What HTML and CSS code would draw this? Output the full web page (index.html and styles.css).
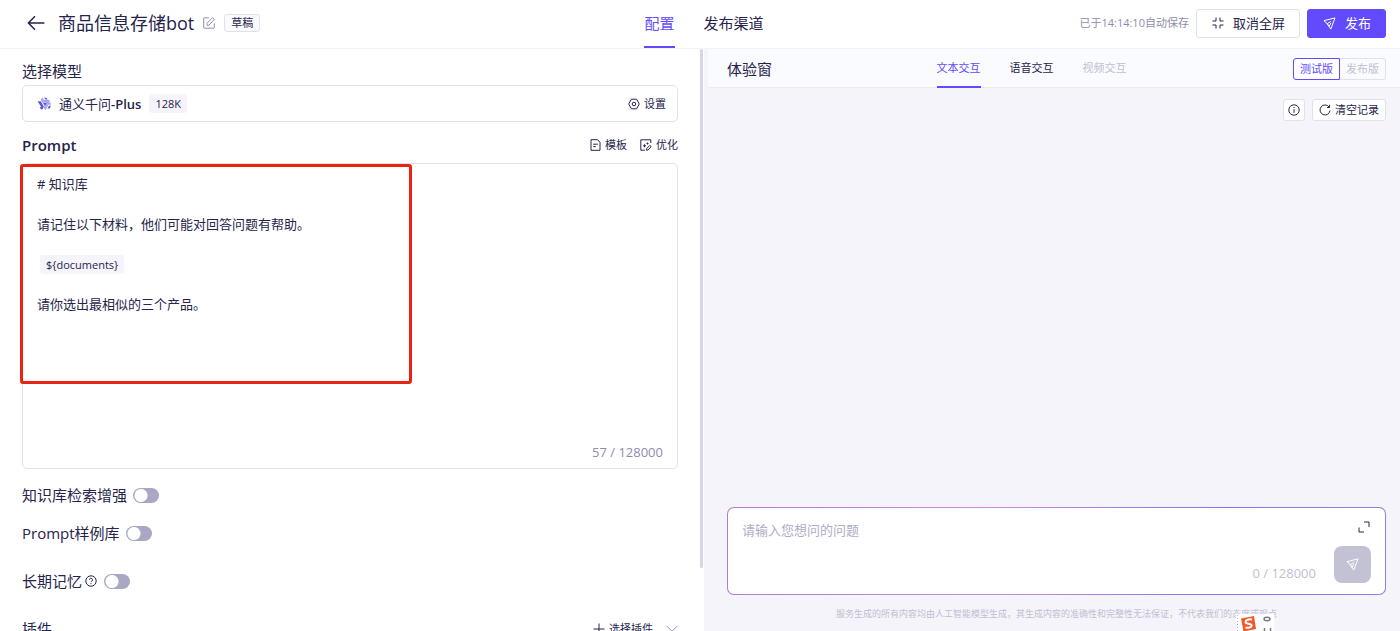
FILE: index.html
```
<!DOCTYPE html>
<html lang="zh-CN">
<head>
<meta charset="utf-8">
<meta name="viewport" content="width=device-width, initial-scale=1">
<title>商品信息存储bot</title>
<link rel="stylesheet" href="styles.css">
</head>
<body>
<div class="app">
  <header class="topbar">
    <div class="topbar-left">
      <button class="icon-btn back" aria-label="返回">
        <svg width="18" height="16" viewBox="0 0 18 16"><path d="M8 1.2 1.4 8 8 14.8M1.6 8H17.4"/></svg>
      </button>
      <h1 class="title">商品信息存储<b>bot</b></h1>
      <button class="icon-btn edit" aria-label="编辑名称">
        <svg width="12" height="12" viewBox="0 0 12 12"><path d="M6 .8H1.2a.5.5 0 0 0-.5.5v9.4c0 .3.2.5.5.5h9.6c.3 0 .5-.2.5-.5V6.500M4 8.200V6.300L9.600.7l1.800 1.700L5.900 8.200z"/></svg>
      </button>
      <span class="badge">草稿</span>
    </div>
    <nav class="tabs" aria-label="主导航">
      <a class="tab active" href="#config">配置</a>
      <a class="tab" href="#channels">发布渠道</a>
    </nav>
    <div class="topbar-right">
      <span class="saved">已于14:14:10自动保存</span>
      <button class="btn">
        <svg width="12" height="12" viewBox="0 0 12 12"><path d="M4 .5V4H.5M8 .5V4h3.500M4 11.500V8H.5M8 11.500V8h3.500"/></svg>
        取消全屏
      </button>
      <button class="btn primary">
        <svg width="13" height="13" viewBox="0 0 13 13"><path d="M12 .9.9 3.700l3.300 3 3.600 5.400zM4.200 6.700l3.600-2.200M4.200 6.700l1.800 2.700 2-3.600"/></svg>
        发布
      </button>
    </div>
  </header>

  <main class="panes">
    <section class="config">
      <h2 class="label">选择模型</h2>
      <div class="model">
        <svg class="model-logo" width="15" height="14" viewBox="0 0 15 14">
          <path class="logo-light" d="M5.200.6 7 3.100H13l-1.300 2.600H5.300L3.700 3zM14.300 7.600l-2.900.2-3 5.400-1.700-2.400 3-5.500h3.300z"/>
          <path class="logo-dark" d="M.6 4.200h3.100l3.200 5.400-1.300 2.700-1.600.2-1.300-2.600h1.500L1.500 5.700zM6 6h3.600L7.800 9z"/>
          <path class="logo-dark" d="M7.200.8h2.300l1.200 1.700H8.200zM12 8.800h2l-1.400 2.600h-2.200z"/>
        </svg>
        <span class="model-name">通义千问<b>-Plus</b></span>
        <span class="chip">128K</span>
        <button class="link-btn push">
          <svg width="12" height="12" viewBox="0 0 12 12"><path d="M3.400 1.200h5.200L11.300 6l-2.700 4.800H3.400L.7 6z"/><circle cx="6" cy="6" r="1.800"/></svg>
          设置
        </button>
      </div>

      <div class="prompt-head">
        <h2 class="label strong" id="prompt-label">Prompt</h2>
        <button class="link-btn push">
          <svg width="11" height="12" viewBox="0 0 11 12"><path d="M1 .7h6.500L10 3.200v8.100H1zM3.200 5.200h4.600M3.200 7.600h2.600"/></svg>
          模板
        </button>
        <button class="link-btn">
          <svg width="12" height="12" viewBox="0 0 12 12"><path d="M10.800 4V.8H.8v10.400H5M6.500 11.200l.3-1.800 3-3 1.400 1.300-3.200 3.300zM3 6.800h3M4.500 5.300v3M7.500 3.500v2M6.500 4.500h2"/></svg>
          优化
        </button>
      </div>

      <div class="prompt-box">
        <div class="prompt-text" contenteditable="true" role="textbox" aria-multiline="true" aria-labelledby="prompt-label" spellcheck="false">
          <p># 知识库</p>
          <p>请记住以下材料，他们可能对回答问题有帮助。</p>
          <p><span class="chip var">${documents}</span></p>
          <p>请你选出最相似的三个产品。</p>
        </div>
        <div class="counter">57 / 128000</div>
        <div class="highlight"></div>
      </div>

      <div class="option">
        <label class="label" for="kb">知识库检索增强</label>
        <input class="switch" id="kb" type="checkbox" role="switch">
      </div>
      <div class="option">
        <label class="label" for="samples"><b>Prompt</b>样例库</label>
        <input class="switch" id="samples" type="checkbox" role="switch">
      </div>
      <div class="option spaced">
        <label class="label" for="memory">长期记忆</label>
        <svg class="help" width="12" height="12" viewBox="0 0 12 12"><circle cx="6" cy="6" r="5.200"/><path d="M4.500 4.800a1.500 1.500 0 1 1 2.200 1.300c-.5.300-.7.500-.7 1M6 8.200v.9"/></svg>
        <input class="switch" id="memory" type="checkbox" role="switch">
      </div>
      <div class="option spaced">
        <h2 class="label">插件</h2>
        <button class="link-btn push">
          <svg width="12" height="12" viewBox="0 0 12 12"><path d="M6 .5v11M.5 6h11"/></svg>
          选择插件
        </button>
        <button class="icon-btn fold" aria-label="展开插件">
          <svg width="12" height="8" viewBox="0 0 12 8"><path d="M1 1.200 6 6.500l5-5.300"/></svg>
        </button>
      </div>
      <div class="scroll-thumb"></div>
    </section>

    <section class="chat">
      <div class="chat-head">
        <h2 class="label">体验窗</h2>
        <nav class="modes" aria-label="交互方式">
          <a class="mode active" href="#text">文本交互</a>
          <a class="mode" href="#voice">语音交互</a>
          <a class="mode disabled" aria-disabled="true">视频交互</a>
        </nav>
        <div class="versions">
          <button class="version active">测试版</button>
          <button class="version" disabled>发布版</button>
        </div>
      </div>
      <div class="chat-tools">
        <button class="small-btn square" aria-label="信息">
          <svg width="12" height="12" viewBox="0 0 12 12"><circle cx="6" cy="6" r="5.200"/><path d="M6 5.200v3.700M6 3v1"/></svg>
        </button>
        <button class="small-btn">
          <svg width="12" height="12" viewBox="0 0 12 12"><path d="M10.200 3.200A5 5 0 1 0 11 6.500M10.600.8v2.700H8"/></svg>
          清空记录
        </button>
      </div>
      <div class="chat-log"></div>
      <div class="composer">
        <textarea class="ask" aria-label="问题" placeholder="请输入您想问的问题"></textarea>
        <button class="icon-btn expand" aria-label="展开输入框">
          <svg width="12" height="12" viewBox="0 0 12 12"><path d="M6 1h5v5M1 6.500V11h5"/></svg>
        </button>
        <span class="ask-count">0 / 128000</span>
        <button class="send" aria-label="发送">
          <svg width="13" height="13" viewBox="0 0 13 13"><path d="M12 .9.9 3.700l3.300 3 3.600 5.400zM4.200 6.700l3.600-2.200M4.200 6.700l1.800 2.700 2-3.600"/></svg>
        </button>
      </div>
      <p class="notice">服务生成的所有内容均由人工智能模型生成，其生成内容的准确性和完整性无法保证，不代表我们的态度或观点</p>
      <div class="ime" aria-hidden="true">
        <svg width="38" height="17" viewBox="0 0 38 17">
          <path class="ime-grip" d="M1.500 1v16"/>
          <path class="ime-logo" d="M5 4.500 18 2l2 13-12.500 2.500z"/>
          <path class="ime-s" d="M16 5.500c-3-.6-6.500.3-6.500 2.400 0 2.400 6.200 1.200 6.200 3.700 0 2-3.200 2.600-6.200 1.900"/>
          <path class="ime-mark" d="M28 5c0-2.300 6-2.300 6 0s-6 2.300-6 0M28.500 14v3M34.500 14v3"/>
        </svg>
      </div>
    </section>
  </main>
</div>
</body>
</html>
```
FILE: styles.css
```
:root {
  --ink: #26244c;
  --muted: #8e8dab;
  --faint: #c0bfd2;
  --line: #e1e1ea;
  --accent: #624aff;
  --soft: #f5f4fa;
}

* {
  box-sizing: border-box;
}

body {
  margin: 0;
  color: var(--ink);
  background: #fff;
  font: 13px/20px "Open Sans", "Noto Sans CJK SC", sans-serif;
}

h1, h2, p {
  margin: 0;
  font-weight: 400;
}

a {
  color: inherit;
  text-decoration: none;
}

button {
  display: flex;
  align-items: center;
  justify-content: center;
  padding: 0;
  border: 0;
  color: inherit;
  background: none;
  font: inherit;
}

svg {
  flex: none;
  fill: none;
  stroke: currentColor;
  stroke-width: 1;
}

b {
  font-weight: 600;
}

.app {
  display: flex;
  flex-direction: column;
  height: 100vh;
  overflow: hidden;
}

/* Top bar */
.topbar {
  display: grid;
  grid-template-columns: 1fr auto 1fr;
  height: 49px;
  padding: 0 14px 0 22px;
  border-bottom: 1px solid #f3f3f7;
}

.topbar-left,
.topbar-right {
  display: flex;
  align-items: center;
  padding-bottom: 2px;
}

.topbar-right {
  justify-content: flex-end;
  gap: 7px;
}

.back {
  width: 28px;
  margin-right: 8px;
}

.back svg {
  stroke-width: 1.500;
}

.title {
  font-size: 18px;
  line-height: 28px;
}

.title b {
  font-weight: 500;
}

.edit {
  margin: 0 9px;
  color: var(--muted);
}

.badge {
  padding: 0 6px;
  border: 1px solid var(--line);
  border-radius: 3px;
  background: #fafafd;
  font-size: 11px;
  line-height: 16px;
}

.tabs {
  display: flex;
  gap: 29px;
}

.tab {
  height: 48px;
  font-size: 15px;
  line-height: 47px;
}

.tab.active {
  border-bottom: 2px solid var(--accent);
  color: var(--accent);
}

.saved {
  color: var(--muted);
  font-size: 11px;
}

.btn {
  gap: 9px;
  height: 29px;
  padding: 0 14px 0 15px;
  border: 1px solid var(--line);
  border-radius: 3px;
  background: #fff;
}

.btn.primary {
  border-color: var(--accent);
  color: #fff;
  background: var(--accent);
}

.panes {
  display: grid;
  flex: 1;
  grid-template-columns: 704fr 696fr;
  min-height: 0;
}

/* Configuration pane */
.config {
  position: relative;
  padding: 12px 26px 0 22px;
  overflow: hidden;
}

.label {
  font-size: 15px;
  line-height: 20px;
}

.label.strong {
  font-weight: 600;
}

.label b {
  font-weight: 500;
}

.model {
  display: flex;
  align-items: center;
  height: 37px;
  margin-top: 4px;
  padding: 0 11px 0 14px;
  border: 1px solid var(--line);
  border-radius: 5px;
}

.model-logo {
  margin-right: 7px;
  stroke: none;
}

.logo-light {
  fill: #aba4ee;
}

.logo-dark {
  fill: #6458d8;
}

.chip {
  margin-left: 8px;
  padding: 0 6px;
  border-radius: 3px;
  background: var(--soft);
  font-size: 11px;
  line-height: 19px;
}

.link-btn {
  gap: 4px;
  font-size: 11px;
}

.push {
  margin-left: auto;
}

.prompt-head {
  display: flex;
  gap: 13px;
  margin-top: 13px;
}

.prompt-box {
  position: relative;
  display: flex;
  flex-direction: column;
  height: 306px;
  margin: 8px 0 16px;
  padding: 10px 14px 6px;
  border: 1px solid var(--line);
  border-radius: 5px;
}

.prompt-text {
  flex: 1;
  outline: 0;
}

.prompt-text p {
  margin-bottom: 20px;
}

.chip.var {
  display: inline-block;
  margin-left: 3px;
}

.counter {
  color: var(--muted);
  text-align: right;
}

.highlight {
  position: absolute;
  top: 0;
  left: -3px;
  width: 60%;
  height: 220px;
  border: 3px solid #e82214;
  border-radius: 3px;
  pointer-events: none;
}

.option {
  display: flex;
  align-items: center;
  margin-bottom: 18px;
}

.option.spaced {
  margin-top: 28px;
}

.switch {
  width: 26px;
  height: 15px;
  margin: 0 0 0 6px;
  border-radius: 8px;
  appearance: none;
  background: radial-gradient(circle at 8px 50%, #fff 6px, transparent 7px) #a9a8c4;
}

.switch:checked {
  background: radial-gradient(circle at 18px 50%, #fff 6px, transparent 7px) var(--accent);
}

.help {
  margin: 0 1px 0 3px;
}

.fold {
  margin-left: 13px;
  color: var(--muted);
}

.scroll-thumb {
  position: absolute;
  top: 0;
  right: 1px;
  width: 3px;
  height: 519px;
  border-radius: 2px;
  background: #d6d5e3;
}

/* Chat pane */
.chat {
  position: relative;
  display: flex;
  flex-direction: column;
  min-width: 0;
  padding-left: 4px;
  background: var(--soft);
}

.chat-head {
  display: grid;
  grid-template-columns: 1fr auto 1fr;
  align-items: center;
  height: 39px;
  padding: 0 14px 0 19px;
  border-bottom: 1px solid #ebebf3;
  background: #fafbfe;
}

.modes {
  display: flex;
  gap: 29px;
  padding-right: 50px;
  font-size: 11px;
}

.mode {
  line-height: 37px;
}

.mode.active {
  border-bottom: 2px solid var(--accent);
  color: var(--accent);
}

.mode.disabled {
  color: var(--faint);
}

.versions {
  display: flex;
  justify-content: flex-end;
}

.version {
  height: 22px;
  padding: 0 6px;
  border: 1px solid var(--line);
  border-left: 0;
  border-radius: 0 3px 3px 0;
  color: var(--faint);
  font-size: 11px;
}

.version.active {
  border: 1px solid var(--accent);
  border-radius: 3px 0 0 3px;
  color: var(--accent);
  background: #fff;
}

.chat-tools {
  display: flex;
  justify-content: flex-end;
  gap: 7px;
  padding: 11px 14px 0;
}

.small-btn {
  gap: 4px;
  height: 22px;
  padding: 0 6px;
  border: 1px solid var(--line);
  border-radius: 3px;
  background: #fff;
  font-size: 11px;
}

.square {
  width: 22px;
  padding: 0;
}

.chat-log {
  flex: 1;
}

.composer {
  display: grid;
  grid-template-columns: 1fr auto 37px;
  grid-template-rows: 1fr 37px;
  column-gap: 18px;
  height: 88px;
  margin: 0 14px 12px 19px;
  padding: 12px 14px 11px;
  border: 1px solid transparent;
  border-radius: 7px;
  background:
    linear-gradient(#fff, #fff) padding-box,
    linear-gradient(90deg, #b478d8, #c88ce0 40%, #8674e8 75%, #8f80e6) border-box;
}

.ask {
  grid-column: 1 / 3;
  padding: 0;
  border: 0;
  outline: 0;
  color: inherit;
  background: none;
  font: inherit;
  resize: none;
}

.ask::placeholder {
  color: #aeadc6;
}

.expand {
  justify-self: end;
  align-self: start;
  margin: 1px 1px 0 0;
}

.ask-count {
  grid-column: 2;
  align-self: end;
  color: var(--faint);
}

.send {
  border-radius: 8px;
  color: #fff;
  background: #c3c2d5;
}

.notice {
  margin: 0 14px 10px 19px;
  overflow: hidden;
  color: var(--faint);
  font-size: 9px;
  line-height: 14px;
  text-align: center;
  white-space: nowrap;
}

/* Input-method bar peeking over the bottom edge */
.ime {
  position: absolute;
  right: 126px;
  bottom: 0;
  height: 17px;
  background: #fff;
}

.ime-grip {
  stroke: #b5b5bd;
  stroke-dasharray: 1 2;
}

.ime-logo {
  fill: #f0592b;
  stroke: none;
}

.ime-s {
  stroke: #fff;
  stroke-width: 2;
}

.ime-mark {
  stroke: #77777e;
  stroke-width: 1.500;
}
```
